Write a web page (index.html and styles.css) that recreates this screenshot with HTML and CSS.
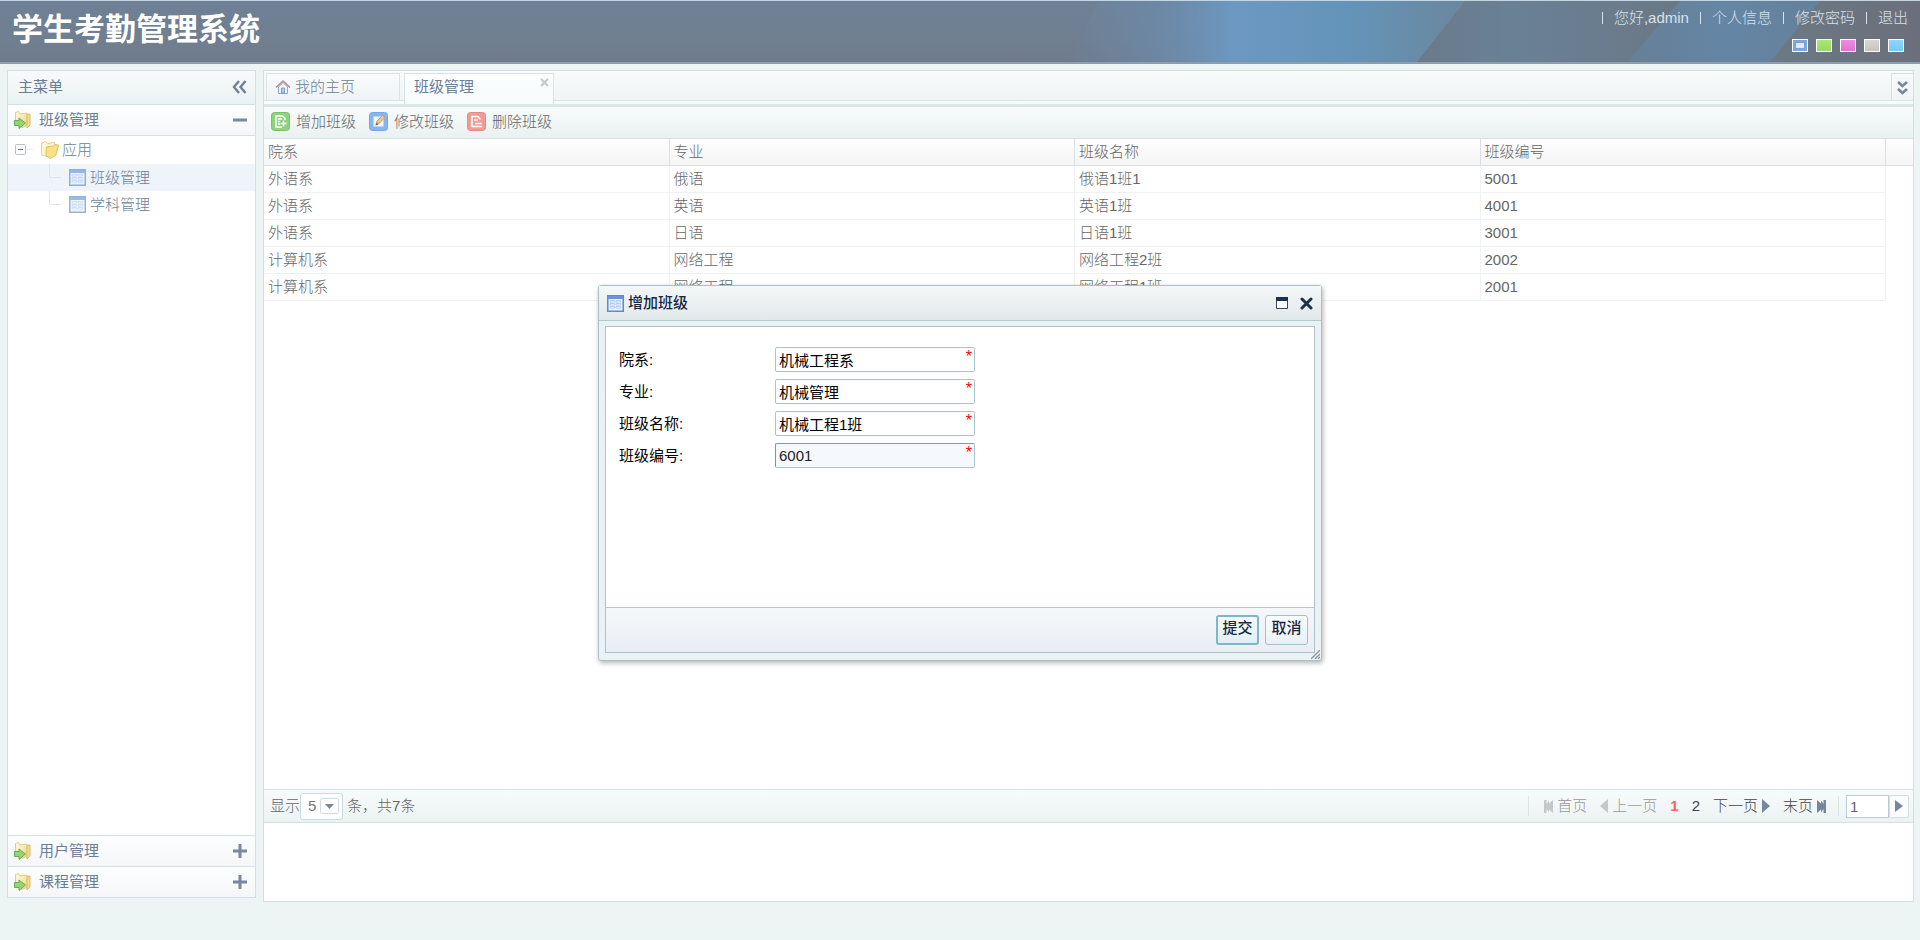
FILE: index.html
```html
<!DOCTYPE html>
<html lang="zh-CN">
<head>
<meta charset="utf-8">
<title>学生考勤管理系统</title>
<link rel="stylesheet" href="styles.css">
</head>
<body>
<svg class="defs" width="0" height="0" aria-hidden="true">
  <linearGradient id="gold" x1="0" y1="0" x2="1" y2="1"><stop offset="0" stop-color="#fffbe8"/><stop offset="1" stop-color="#f0d878"/></linearGradient>
  <symbol id="i-go" viewBox="0 0 20 20">
    <path d="M2.500 14V2.500l3-1L7 4l7-1v12.500l-5 2z" fill="url(#gold)" stroke="#e2cd8d"/>
    <path d="M14 4.500l3-.5v11l-3 3z" fill="#f3dc8c" stroke="#d8bb6c"/>
    <path d="M1.500 10.500H6V8l6.500 5L6 18.500v-3H1.500z" fill="#93d474" stroke="#68ad56"/>
  </symbol>
  <symbol id="i-folder" viewBox="0 0 20 20">
    <path d="M1.500 3l4-1.500 2 2 7-1v11l-4 4-9-2.500z" fill="#fff7cc" stroke="#e6d08a"/>
    <path d="M6.500 7l7-1 1-1.500 4 .5-2.500 10-5.500 3.500-4.500-3z" fill="#f9e283" stroke="#dcc066"/>
  </symbol>
  <symbol id="i-table" viewBox="0 0 17 17">
    <path d="M.75.75h15.500v15.500H.75z" fill="#eaf2fd" stroke="#5b8ace" stroke-width="1.500"/>
    <path d="M1 1h15v3H1z" fill="#6796da"/>
    <path d="M3 5.500h4.500V7H3zM9 5.500h4.500V7H9zM3 8.500h4.500V10H3zM9 8.500h4.500V10H9zM3 11.500h4.500V13H3zM9 11.500h4.500V13H9z" fill="#fff" stroke="#9dbbe9" stroke-width=".7"/>
  </symbol>
  <symbol id="i-home" viewBox="0 0 16 16">
    <path d="M3.500 8v6.500h9V8L8 3.500z" fill="#f3f8ff" stroke="#8ba6d6"/>
    <path d="M6.500 14V9h3v5z" fill="#b3cdf5" stroke="#7c9bd2"/>
    <path d="M1 8.500L8 2l7 6.500" fill="none" stroke="#b98a98" stroke-width="1.600"/>
  </symbol>
  <symbol id="i-add" viewBox="0 0 19 19">
    <rect x=".5" y=".5" width="18" height="18" rx="3" fill="#8ed17f" stroke="#79c16c"/>
    <path d="M11 15H5V4h6.500L14 6.500V8" fill="none" stroke="#fff" stroke-width="1.500"/>
    <path d="M7 7h4M7 9.500h2M7 12h2M9.500 11.500h6M12.500 8.500v6" stroke="#fff" stroke-width="1.500"/>
  </symbol>
  <symbol id="i-edit" viewBox="0 0 19 19">
    <rect x=".5" y=".5" width="18" height="18" rx="3" fill="#86b6ef" stroke="#75a5e2"/>
    <path d="M4.500 4.500h10v10h-10z" fill="#eef6ff"/>
    <path d="M7 12.500l1-3.500L13.500 3.500l2.500 2L10.500 11z" fill="#f2c184" stroke="#c9a078"/>
    <path d="M6.500 13.500l1-3 2 2z" fill="#6b6b72"/>
  </symbol>
  <symbol id="i-del" viewBox="0 0 19 19">
    <rect x=".5" y=".5" width="18" height="18" rx="3" fill="#f09b95" stroke="#e48983"/>
    <path d="M15 14.500H5V4.500h6l2.500 3" fill="none" stroke="#fff" stroke-width="1.600"/>
    <path d="M7 8h4M8 11.500h7" stroke="#fff" stroke-width="1.500"/>
  </symbol>
</svg>

<header class="top">
  <svg class="beams" viewBox="0 0 900 61" preserveAspectRatio="none" aria-hidden="true">
    <defs>
      <linearGradient id="b1"><stop offset="0" stop-color="#6b8fb0" stop-opacity="0"/><stop offset=".2" stop-color="#6b8bab" stop-opacity=".6"/><stop offset=".42" stop-color="#6c98c1"/><stop offset=".7" stop-color="#6494ba"/><stop offset="1" stop-color="#6b879c"/></linearGradient>
      <linearGradient id="b0"><stop offset="0" stop-color="#6a7a89"/><stop offset=".35" stop-color="#698196"/><stop offset="1" stop-color="#6b7886"/></linearGradient>
      <linearGradient id="b2"><stop offset="0" stop-color="#677f95"/><stop offset=".5" stop-color="#6486a5"/><stop offset="1" stop-color="#65809a"/></linearGradient>
      <linearGradient id="b3"><stop offset="0" stop-color="#6b7a86"/><stop offset="1" stop-color="#6b6f7b"/></linearGradient>
    </defs>
    <path d="M80 0H446L398 61H50z" fill="url(#b1)"/>
    <path d="M446 0H660L608 61H398z" fill="url(#b0)"/>
    <path d="M660 0H800L750 61H608z" fill="url(#b2)"/>
    <path d="M800 0H900V61H750z" fill="url(#b3)"/>
  </svg>
  <h1>学生考勤管理系统</h1>
  <div class="user">
    <nav class="links">
      <span>您好,admin</span><a href="#">个人信息</a><a href="#">修改密码</a><a href="#">退出</a>
    </nav>
    <div class="skins">
      <button class="skin s1" aria-label="蓝灰"></button>
      <button class="skin s2" aria-label="绿色"></button>
      <button class="skin s3" aria-label="粉色"></button>
      <button class="skin s4" aria-label="灰色"></button>
      <button class="skin s5" aria-label="天蓝"></button>
    </div>
  </div>
</header>

<div class="work">
  <aside class="side">
    <div class="side-head">主菜单
      <button class="bare" aria-label="收起"><svg width="15" height="14" viewBox="0 0 15 14"><path d="M7 1L2 7l5 6M13.500 1l-5 6 5 6" fill="none" stroke="#6f8198" stroke-width="2.400"/></svg></button>
    </div>
    <button class="acc open"><svg width="20" height="20"><use href="#i-go"/></svg><span>班级管理</span><svg width="14" height="14"><path d="M0 7h14" stroke="#7788a0" stroke-width="3"/></svg></button>
    <div class="tree">
      <div class="node root">
        <svg class="twig" width="20" height="14"><rect x=".5" y="1.500" width="10" height="10" rx="1" fill="#fbfbfb" stroke="#b9bfc8"/><path d="M3 6.500h5" stroke="#70777f"/><path d="M12 6.500h7" stroke="#dfe3e6" stroke-dasharray="1 1"/></svg>
        <svg width="20" height="20"><use href="#i-folder"/></svg><a href="#">应用</a>
      </div>
      <div class="node sel"><svg class="elbow" width="12" height="27"><path d="M.5 0v13.500H12" fill="none" stroke="#e2e5ea"/></svg><svg class="pale" width="17" height="17"><use href="#i-table"/></svg><a href="#">班级管理</a></div>
      <div class="node"><svg class="elbow" width="12" height="27"><path d="M.5 0v13.500H12" fill="none" stroke="#e2e5ea"/></svg><svg class="pale" width="17" height="17"><use href="#i-table"/></svg><a href="#">学科管理</a></div>
    </div>
    <button class="acc"><svg width="20" height="20"><use href="#i-go"/></svg><span>用户管理</span><svg width="14" height="14"><path d="M0 7h14M7 0v14" stroke="#7788a0" stroke-width="3"/></svg></button>
    <button class="acc"><svg width="20" height="20"><use href="#i-go"/></svg><span>课程管理</span><svg width="14" height="14"><path d="M0 7h14M7 0v14" stroke="#7788a0" stroke-width="3"/></svg></button>
  </aside>

  <main class="main">
    <div class="tabs">
      <button class="tab"><svg width="16" height="16"><use href="#i-home"/></svg>我的主页</button>
      <button class="tab active">班级管理<svg class="tab-x" width="9" height="9"><path d="M1 1l7 7M8 1L1 8" stroke="#c3cacf" stroke-width="2.400"/></svg></button>
      <button class="more" aria-label="更多"><svg width="11" height="14" viewBox="0 0 11 14"><path d="M1 1l4.500 4L10 1M1 8l4.500 4L10 8" fill="none" stroke="#77869d" stroke-width="2.600"/></svg></button>
    </div>
    <div class="tools">
      <button><svg width="19" height="19"><use href="#i-add"/></svg>增加班级</button>
      <button><svg width="19" height="19"><use href="#i-edit"/></svg>修改班级</button>
      <button><svg width="19" height="19"><use href="#i-del"/></svg>删除班级</button>
    </div>
    <div class="grid">
      <table>
        <colgroup><col><col><col><col><col class="spare"></colgroup>
        <thead><tr><th>院系</th><th>专业</th><th>班级名称</th><th>班级编号</th><td></td></tr></thead>
        <tbody>
          <tr><td>外语系</td><td>俄语</td><td>俄语1班1</td><td>5001</td></tr>
          <tr><td>外语系</td><td>英语</td><td>英语1班</td><td>4001</td></tr>
          <tr><td>外语系</td><td>日语</td><td>日语1班</td><td>3001</td></tr>
          <tr><td>计算机系</td><td>网络工程</td><td>网络工程2班</td><td>2002</td></tr>
          <tr><td>计算机系</td><td>网络工程</td><td>网络工程1班</td><td>2001</td></tr>
        </tbody>
      </table>
    </div>
    <div class="pager">
      <label for="size">显示</label>
      <span class="size"><select id="size"><option>5</option><option>10</option></select><svg width="19" height="16"><rect x=".5" y=".5" width="18" height="15" rx="1" fill="#fff" stroke="#cfdce2"/><path d="M5 6h9l-4.500 5z" fill="#77869d"/></svg></span>
      <span class="total">条，共7条</span>
      <nav class="pages">
        <a class="off" href="#"><svg width="9" height="13"><path d="M0 0h2.500v4L5 .5v3L9 0v13L5 9.500v3L2.500 9v4H0z" fill="#c6c9cc"/></svg><span>首页</span></a>
        <a class="off" href="#"><svg width="8" height="14"><path d="M8 0v14L0 7z" fill="#c6c9cc"/></svg><span>上一页</span></a>
        <a class="cur" href="#">1</a>
        <a href="#">2</a>
        <a href="#"><span>下一页</span><svg width="8" height="14"><path d="M0 0v14l8-7z" fill="#77869d"/></svg></a>
        <a href="#"><span>末页</span><svg width="9" height="13"><path d="M0 0l4 3.500v-3L6.500 4V0H9v13H6.500V9L4 12.500v-3L0 13z" fill="#77869d"/></svg></a>
      </nav>
      <div class="jump">
        <input type="text" value="1" aria-label="页码"><button aria-label="跳转"><svg width="8" height="12"><path d="M0 0v12l8-6z" fill="#77869d"/></svg></button>
      </div>
    </div>
    <div class="rest"></div>
  </main>
</div>

<form class="dialog" role="dialog" aria-labelledby="dlg-title">
  <div class="dlg-head">
    <svg width="17" height="17"><use href="#i-table"/></svg>
    <h2 id="dlg-title">增加班级</h2>
    <button type="button" aria-label="最大化"><svg width="12" height="12"><path d="M.5.500h11v11H.5z" fill="#fff" stroke="#39475c"/><path d="M0 0h12v4H0z" fill="#1d304f"/></svg></button>
    <button type="button" aria-label="关闭"><svg width="13" height="13"><path d="M2 2l9 9M11 2l-9 9" stroke="#1d304f" stroke-width="3" stroke-linecap="round"/></svg></button>
  </div>
  <div class="dlg-box">
    <div class="fields">
      <label for="f1">院系:</label><div class="field"><input id="f1" type="text" value="机械工程系"><span class="req">*</span></div>
      <label for="f2">专业:</label><div class="field"><input id="f2" type="text" value="机械管理"><span class="req">*</span></div>
      <label for="f3">班级名称:</label><div class="field"><input id="f3" type="text" value="机械工程1班"><span class="req">*</span></div>
      <label for="f4">班级编号:</label><div class="field on"><input id="f4" type="text" value="6001"><span class="req">*</span></div>
    </div>
    <div class="dlg-foot"><button type="submit" class="btn primary">提交</button><button type="button" class="btn">取消</button></div>
  </div>
  <svg class="grip" width="9" height="9"><path d="M0 9l9-9M4 9l5-5M7 9l2-2" stroke="#8b949c" stroke-width="1.300"/></svg>
</form>
</body>
</html>
```
FILE: styles.css
```css
* { box-sizing: border-box; }
body {
  margin: 0;
  min-height: 100vh;
  display: flex;
  flex-direction: column;
  background: #edf4f4;
  font: 300 15px/20px "Liberation Sans", "Noto Sans CJK SC", sans-serif;
  color: #666;
}
button, input, select { font: inherit; color: inherit; margin: 0; }
button { background: none; border: 0; padding: 0; }
svg { display: block; flex: none; }
a { color: inherit; text-decoration: none; }
.defs { position: absolute; }

.top {
  position: relative;
  height: 64px;
  display: flex;
  justify-content: space-between;
  border-top: 1px solid #c3d5e0;
  border-bottom: 2px solid #8b9dae;
  background: linear-gradient(#6f8096, #707f91 60%, #707b8c);
}
.beams { position: absolute; right: 0; top: 0; width: 47%; height: 100%; }
.top h1 {
  margin: 0;
  padding-left: 12px;
  font-size: 31px;
  line-height: 58px;
  font-weight: 700;
  color: #fff;
}
.user { position: relative; padding: 7px 12px 0 0; color: #d9e2eb; }
.links { display: flex; }
.links > * { display: flex; align-items: center; }
.links > *::before { content: ""; width: 1px; height: 12px; margin: 0 11px; background: #d9e2eb; }
.skins { display: flex; justify-content: flex-end; gap: 8px; padding: 11px 4px 0 0; }
.skin { width: 16px; height: 13px; border: 1px solid #fff; }
.s1 { background: linear-gradient(#dbe9f9, #dbe9f9) center / 8px 5px no-repeat, linear-gradient(#6f9fe0, #7ba4da); box-shadow: inset 0 0 0 2px #7ea6dc; }
.s2 { background: linear-gradient(#abe873, #98d868); }
.s3 { background: linear-gradient(#f28be6, #d974d2); }
.s4 { background: linear-gradient(#d8d5d3, #c6c3c1); }
.s5 { background: linear-gradient(#8bd8ff, #77c8fa); }

.work { flex: 1; display: flex; gap: 7px; padding: 6px 6px 38px 7px; }
.side {
  width: 249px;
  margin-bottom: 4px;
  display: flex;
  flex-direction: column;
  background: #fff;
  border: 1px solid #d0e0e6;
  border-bottom: 0;
  font-weight: 400;
  color: #6c7e96;
}
.side-head {
  height: 34px;
  display: flex;
  align-items: center;
  justify-content: space-between;
  padding: 0 8px 2px 10px;
  border-bottom: 1px solid #d0dfe4;
  background: linear-gradient(#f7fafb, #ebf2f3);
}
.acc {
  height: 31px;
  display: flex;
  align-items: center;
  gap: 6px;
  padding: 0 8px 0 5px;
  text-align: left;
  border-bottom: 1px solid #d0e2e9;
  background: linear-gradient(#fdfefe, #f4f6f8);
}
.acc span { flex: 1; }
.tree { flex: 1; border-bottom: 1px solid #d0e2e9; font-weight: 300; color: #6c7e96; }
.node { height: 27px; display: flex; align-items: center; gap: 4px; padding-left: 41px; }
.root { height: 28px; padding-left: 7px; gap: 2px; }
.root .twig { margin-right: 3px; }
.elbow { margin-right: 4px; }
.sel { background: #eff3fa; }
.pale { opacity: .65; }

.main {
  flex: 1;
  min-width: 0;
  display: flex;
  flex-direction: column;
  border: 1px solid #d0e0e4;
  background: #fff;
}
.tabs {
  position: relative;
  height: 36px;
  display: flex;
  gap: 4px;
  padding: 2px 0 0 2px;
  background: linear-gradient(#f7fbfc, #f0f4f5 29px, #d8e5e8 29px, #d8e5e8 30px, #f6fcfb 30px, #f6fcfb 33px, #dbe8e8 33px);
}
.tab {
  position: relative;
  width: 134px;
  height: 28px;
  display: flex;
  align-items: center;
  gap: 4px;
  padding: 0 8px;
  border: 1px solid #d9e4e7;
  background: linear-gradient(#f9fbfc, #eff3f5);
  color: #6f7e93;
}
.tab.active { width: 150px; height: 31px; padding: 0 9px 4px; border-bottom: 0; background: linear-gradient(#fdfdfe, #f6fcfb); font-weight: 400; color: #6c7e96; }
.tab-x { position: absolute; top: 4px; right: 4px; }
.more { width: 22px; height: 28px; margin-left: auto; display: grid; place-items: center; border: 1px solid #d4e0e4; border-width: 1px 0 0 1px; }
.tools {
  height: 32px;
  display: flex;
  gap: 13px;
  padding: 0 0 2px 7px;
  border-bottom: 1px solid #d5e2e4;
  background: linear-gradient(#f8fbfb, #eaf1f1);
}
.tools button { display: flex; align-items: center; gap: 6px; }
.grid { flex: 1; }
table { width: 100%; table-layout: fixed; border-collapse: separate; border-spacing: 0; }
.spare { width: 27px; }
th, td {
  height: 27px;
  padding: 0 0 0 4px;
  text-align: left;
  font-weight: 300;
  border-bottom: 1px solid #eef2f3;
  border-right: 1px solid #f0f2f4;
}
thead tr > * { border-color: #dde0e2; background: linear-gradient(#fdfdfd, #f5f5f6); }
thead td { border-right: 0; }
.pager {
  height: 34px;
  display: flex;
  align-items: center;
  padding: 0 4px 0 6px;
  border: 1px solid #d2e2e5;
  border-width: 1px 0;
  background: linear-gradient(#f8fbfb, #ecf2f2);
}
.size { position: relative; }
.size select { display: block; width: 43px; height: 27px; padding: 0 0 0 7px; appearance: none; border: 1px solid #c9dbe0; border-radius: 3px; background: #fff; color: #777; }
.size svg { position: absolute; right: 4px; top: 5px; pointer-events: none; }
.total { padding-left: 4px; }
.pages { display: flex; gap: 13px; margin-left: auto; padding: 0 12px 0 15px; border: 1px solid #dbe4e7; border-width: 0 1px; color: #444; }
.pages a { display: flex; align-items: center; gap: 4px; }
.pages .off { color: #999; }
.pages .cur { color: #f26560; font-weight: 700; }
.jump { display: flex; margin-left: 7px; }
.jump input { width: 43px; height: 23px; padding: 0 3px; border: 1px solid #c0cad3; background: #fff; }
.jump button { width: 20px; height: 23px; display: grid; place-items: center; border: 1px solid #d3dde2; border-radius: 2px; background: #fbfcfd; }
.rest { height: 78px; }

.dialog {
  position: absolute;
  top: 285px;
  left: 0;
  right: 0;
  width: 724px;
  margin: 0 auto;
  padding: 0 6px 7px;
  border: 1px solid #a9c0c7;
  border-radius: 3px;
  background: #eaf2f6;
  box-shadow: 1px 2px 5px rgba(0, 0, 0, .3);
  font-weight: 400;
  color: #000;
}
.dlg-head {
  height: 35px;
  display: flex;
  align-items: center;
  gap: 12px;
  margin: 0 -6px 5px;
  padding: 0 8px;
  border-bottom: 1px solid #b3cad0;
  background: linear-gradient(#f4f7f8, #e1e9ea);
}
.dlg-head h2 { flex: 1; margin: 0 0 0 -8px; font-size: 15px; font-weight: 500; color: #17263f; }
.dlg-box { border: 1px solid #b1c1ca; background: #fff; }
.fields {
  min-height: 280px;
  display: grid;
  grid-template-columns: 156px 200px;
  grid-auto-rows: 25px;
  row-gap: 7px;
  align-content: start;
  align-items: center;
  padding: 20px 13px;
}
.field { position: relative; }
.field input { display: block; width: 100%; height: 25px; padding: 0 3px 1px; border: 1px solid #a7c5ca; border-radius: 2px; background: #fff; outline: 0; }
.field.on input { border-color: #6fa0a8 #a7c9ce #a7c9ce #6fa0a8; background: #f5f9fd; color: #222; }
.req { position: absolute; top: 1px; right: 3px; color: #f00; font-size: 16px; line-height: 18px; }
.dlg-foot {
  display: flex;
  justify-content: flex-end;
  gap: 6px;
  padding: 7px 6px;
  border-top: 1px solid #b8c8d0;
  background: linear-gradient(#f5f8fa, #e9eef3);
}
.btn { width: 43px; height: 30px; padding-bottom: 4px; border: 1px solid #9fc2cd; border-radius: 3px; background: linear-gradient(#fafcfd, #e9f1f5); font-weight: 500; color: #17263f; }
.primary { border: 2px solid #7fb7c8; background: linear-gradient(#f6fbfd, #dfeff5); }
.grip { position: absolute; right: 1px; bottom: 1px; }
```
